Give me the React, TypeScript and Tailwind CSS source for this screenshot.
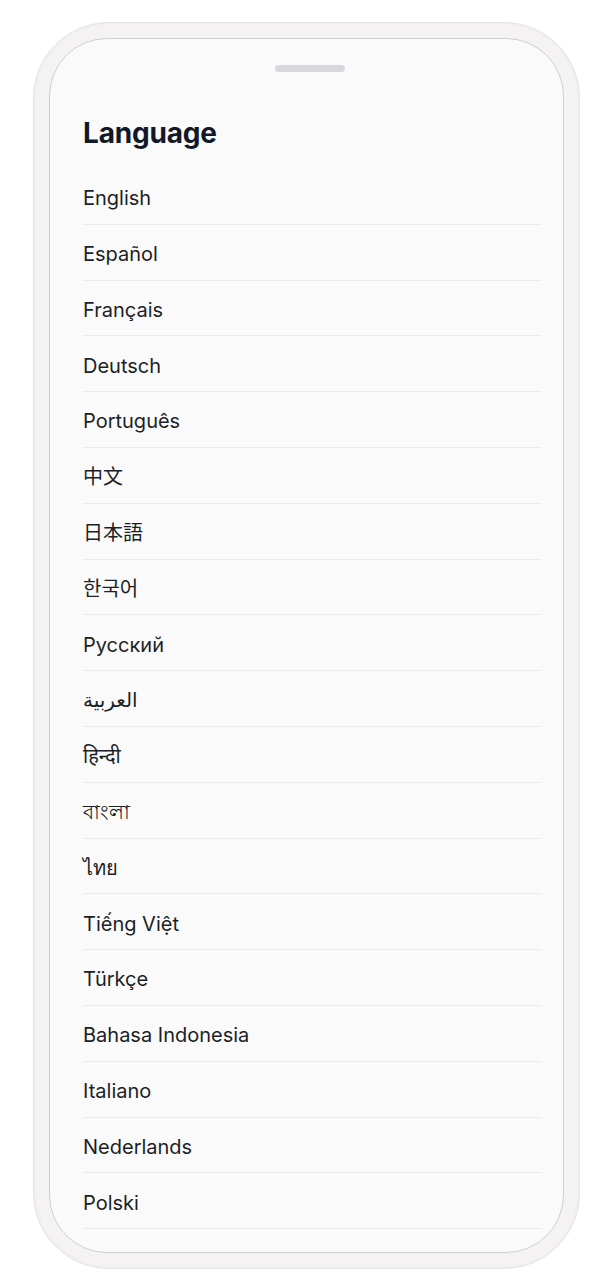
import React from "react";

const langs: { label: string; cls?: string }[] = [
  { label: "English" },
  { label: "Español" },
  { label: "Français" },
  { label: "Deutsch" },
  { label: "Português" },
  { label: "中文", cls: "font-['Inter','Noto_Sans_CJK_SC',sans-serif]" },
  { label: "日本語", cls: "font-['Inter','Noto_Sans_CJK_JP',sans-serif]" },
  { label: "한국어", cls: "font-['Inter','Noto_Sans_CJK_KR',sans-serif]" },
  { label: "Русский" },
  { label: "العربية" },
  { label: "हिन्दी" },
  { label: "বাংলা" },
  { label: "ไทย" },
  { label: "Tiếng Việt" },
  { label: "Türkçe" },
  { label: "Bahasa Indonesia" },
  { label: "Italiano" },
  { label: "Nederlands" },
  { label: "Polski" },
];

export default function App() {
  return (
    <div className="w-[611px] h-[1288px] bg-white pt-[22px] pl-[33px] font-['Inter','Noto_Sans','DejaVu_Sans',sans-serif]">
      <div className="w-[547px] h-[1247px] rounded-[76px] border border-[#e6e3e3] bg-[#f4f2f2] p-[15px] shadow-[inset_0_0_3px_rgba(0,0,0,0.06)]">
        <div className="w-full h-full rounded-[58px] border border-[#cfcfcf] bg-[#fafafa] overflow-hidden flex flex-col">
          <div className="flex justify-center pt-[26px] pl-[6px]">
            <div className="w-[70px] h-[7px] rounded-full bg-[#d6d8dc]" />
          </div>
          <div className="pl-[33px] pr-[21px]">
            <h1 className="mt-[43px] mb-[18px] text-[28px] leading-[36px] font-bold text-[#111827] tracking-[-0.2px]">
              Language
            </h1>
            <ul>
              {langs.map((l) => (
                <li
                  key={l.label}
                  className={`flex h-[55.8px] items-end pb-[13.5px] border-b border-[#ebebeb] text-[20px] leading-[24px] text-[#1c1f26] ${l.cls ?? ""}`}
                >
                  {l.label}
                </li>
              ))}
            </ul>
          </div>
        </div>
      </div>
    </div>
  );
}
